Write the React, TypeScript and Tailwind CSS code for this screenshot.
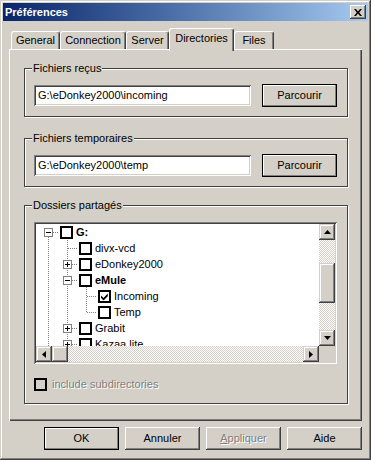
import React from 'react';

const pushBevel = 'shadow-[inset_-1px_-1px_0_#404040,inset_1px_1px_0_#ffffff,inset_-2px_-2px_0_#808080]';
const defaultBevel = 'border border-black shadow-[inset_-1px_-1px_0_#808080,inset_1px_1px_0_#ffffff]';
const scrollBevel = 'shadow-[inset_-1px_-1px_0_#404040,inset_1px_1px_0_#d4d0c8,inset_-2px_-2px_0_#808080,inset_2px_2px_0_#ffffff]';
const sunken = 'shadow-[inset_1px_1px_0_#808080,inset_-1px_-1px_0_#ffffff,inset_2px_2px_0_#404040,inset_-2px_-2px_0_#d4d0c8]';
const dither = 'bg-[image:repeating-conic-gradient(#ffffff_0_25%,#d4d0c8_0_50%)] bg-[length:2px_2px]';
const disabledText = 'text-[#808080] [text-shadow:1px_1px_0_#ffffff]';

const TABS = [
  { label: 'General', w: 'w-[49px]' },
  { label: 'Connection', w: 'w-[66px]' },
  { label: 'Server', w: 'w-[43px]' },
  { label: 'Directories', w: 'w-[65px]', active: true },
  { label: 'Files', w: 'w-[40px]' },
];

const TREE = [
  { level: 0, exp: 'minus', label: 'G:', bold: true },
  { level: 1, exp: '', label: 'divx-vcd' },
  { level: 1, exp: 'plus', label: 'eDonkey2000' },
  { level: 1, exp: 'minus', label: 'eMule', bold: true },
  { level: 2, exp: '', label: 'Incoming', checked: true },
  { level: 2, exp: '', label: 'Temp' },
  { level: 1, exp: 'plus', label: 'Grabit' },
  { level: 1, exp: 'plus', label: 'Kazaa lite' },
];

const INDENT = ['pl-[8px]', 'pl-[27px]', 'pl-[46px]'];

function Button({ label, isDefault, disabled, mnemonic }: { label: string; isDefault?: boolean; disabled?: boolean; mnemonic?: boolean }) {
  return (
    <div className={`w-[75px] h-[23px] flex items-center justify-center bg-[#d4d0c8] ${isDefault ? defaultBevel : pushBevel} ${disabled ? disabledText : ''}`}>
      {mnemonic ? (
        <span>
          <span className="underline">{label[0]}</span>
          {label.slice(1)}
        </span>
      ) : (
        label
      )}
    </div>
  );
}

function Group({ title, className = '', children }: { title: string; className?: string; children: React.ReactNode }) {
  return (
    <fieldset className={`min-w-0 border border-[#404040] shadow-[1px_1px_0_#ffffff,inset_1px_1px_0_#ffffff] ${className}`}>
      <legend className="ml-[7px] px-[1px] leading-[14px] bg-[#d4d0c8]">{title}</legend>
      {children}
    </fieldset>
  );
}

function PathRow({ value }: { value: string }) {
  return (
    <div className="flex items-center gap-[11px] pt-[9px] pb-[9px] pl-[9px] pr-[10px]">
      <div className={`w-[217px] h-[21px] bg-white flex items-center pl-[4px] ${sunken}`}>{value}</div>
      <Button label="Parcourir" isDefault />
    </div>
  );
}

function Expander({ kind }: { kind: string }) {
  if (!kind) return <div className="w-[9px] h-[9px]" />;
  return (
    <svg width="9" height="9" viewBox="0 0 9 9" shapeRendering="crispEdges" className="block shrink-0">
      <rect x="0.5" y="0.5" width="8" height="8" fill="#ffffff" stroke="#808080" />
      <line x1="2" y1="4.5" x2="7" y2="4.5" stroke="#000000" />
      {kind === 'plus' && <line x1="4.5" y1="2" x2="4.5" y2="7" stroke="#000000" />}
    </svg>
  );
}

function Check({ checked, disabled }: { checked?: boolean; disabled?: boolean }) {
  return (
    <div className={`w-[13px] h-[13px] shrink-0 border-2 border-black ${disabled ? 'bg-[#d4d0c8]' : 'bg-white'}`}>
      {checked && (
        <svg width="9" height="9" viewBox="0 0 9 9" className="block">
          <polygon points="1,3.5 3.5,6 7.8,1.5 7.8,4.2 3.5,8.4 1,5.8" fill="#000000" />
        </svg>
      )}
    </div>
  );
}

function Arrow({ dir }: { dir: 'up' | 'down' | 'left' | 'right' }) {
  const pts = {
    up: '3.5,0 7,4 0,4',
    down: '0,0 7,0 3.5,4',
    left: '4,0 4,7 0,3.5',
    right: '0,0 4,3.5 0,7',
  }[dir];
  const vertical = dir === 'up' || dir === 'down';
  return (
    <div className={`w-[16px] h-[16px] shrink-0 bg-[#d4d0c8] flex items-center justify-center ${scrollBevel}`}>
      <svg width={vertical ? 7 : 4} height={vertical ? 4 : 7} viewBox={vertical ? '0 0 7 4' : '0 0 4 7'} className="block">
        <polygon points={pts} fill="#000000" />
      </svg>
    </div>
  );
}

function TreeLines() {
  const dash = { stroke: '#808080', strokeDasharray: '1 1' };
  return (
    <svg className="absolute inset-0 pointer-events-none" width="283" height="122" shapeRendering="crispEdges">
      <line x1="12.5" y1="13" x2="12.5" y2="122" {...dash} />
      <line x1="17" y1="8.5" x2="23" y2="8.5" {...dash} />
      <line x1="31.5" y1="16" x2="31.5" y2="122" {...dash} />
      <line x1="32" y1="24.5" x2="42" y2="24.5" {...dash} />
      <line x1="36" y1="40.5" x2="42" y2="40.5" {...dash} />
      <line x1="36" y1="56.5" x2="42" y2="56.5" {...dash} />
      <line x1="36" y1="104.5" x2="42" y2="104.5" {...dash} />
      <line x1="36" y1="120.5" x2="42" y2="120.5" {...dash} />
      <line x1="50.5" y1="63" x2="50.5" y2="89" {...dash} />
      <line x1="51" y1="72.5" x2="61" y2="72.5" {...dash} />
      <line x1="51" y1="88.5" x2="61" y2="88.5" {...dash} />
    </svg>
  );
}

function FolderTree() {
  return (
    <div className={`w-[303px] h-[142px] bg-white p-[2px] ${sunken}`}>
      <div className="grid grid-cols-[283px_16px] grid-rows-[122px_16px] w-[299px] h-[138px]">
        <div className="relative overflow-hidden">
          <TreeLines />
          <div className="relative flex flex-col">
            {TREE.map((node) => (
              <div key={node.label} className={`flex items-center h-[16px] shrink-0 whitespace-nowrap ${INDENT[node.level]}`}>
                <Expander kind={node.exp} />
                <div className="ml-[7px]">
                  <Check checked={node.checked} />
                </div>
                <span className={`ml-[3px] leading-[16px] ${node.bold ? 'font-bold' : ''}`}>{node.label}</span>
              </div>
            ))}
          </div>
        </div>
        <div className="flex flex-col">
          <Arrow dir="up" />
          <div className={`h-[23px] ${dither}`} />
          <div className={`h-[40px] bg-[#d4d0c8] ${scrollBevel}`} />
          <div className={`flex-1 ${dither}`} />
          <Arrow dir="down" />
        </div>
        <div className="flex">
          <Arrow dir="left" />
          <div className={`w-[16px] bg-[#d4d0c8] ${scrollBevel}`} />
          <div className={`flex-1 ${dither}`} />
          <Arrow dir="right" />
        </div>
        <div className="bg-[#d4d0c8]" />
      </div>
    </div>
  );
}

export default function App() {
  return (
    <div className="w-[371px] h-[460px] p-[3px] flex flex-col bg-[#d4d0c8] text-[11px] text-black font-['Liberation_Sans',Arial,sans-serif] shadow-[inset_-1px_-1px_0_#404040,inset_1px_1px_0_#d4d0c8,inset_-2px_-2px_0_#808080,inset_2px_2px_0_#ffffff]">
      {/* title bar */}
      <div className="h-[18px] shrink-0 flex items-center justify-between pl-[2px] pr-[2px] bg-linear-to-r from-[#0a246a] to-[#a6caf0]">
        <span className="text-white font-bold leading-none">Préférences</span>
        <div className={`w-[16px] h-[14px] bg-[#d4d0c8] flex items-center justify-center ${pushBevel}`}>
          <svg width="8" height="7" viewBox="0 0 8 7" className="block">
            <path d="M0 0 H2 L4 2.4 L6 0 H8 L5.2 3.5 L8 7 H6 L4 4.6 L2 7 H0 L2.8 3.5 Z" fill="#000000" />
          </svg>
        </div>
      </div>

      {/* tabs */}
      <div className="h-[28px] shrink-0 flex items-end pl-[8px]">
        {TABS.map((tab) =>
          tab.active ? (
            <div
              key={tab.label}
              className={`${tab.w} relative z-10 h-[23px] -mb-[2px] pb-[4px] flex items-center justify-center bg-[#d4d0c8] border-t border-l border-white border-r border-r-[#404040] rounded-t-[3px] shadow-[inset_-1px_0_0_#808080]`}
            >
              {tab.label}
            </div>
          ) : (
            <div
              key={tab.label}
              className={`${tab.w} h-[18px] flex items-center justify-center border-t border-l border-white border-r border-r-[#404040] rounded-t-[3px] shadow-[inset_-1px_0_0_#808080]`}
            >
              {tab.label}
            </div>
          )
        )}
      </div>

      {/* tab page */}
      <div className="w-[353px] h-[372px] shrink-0 ml-[6px] pt-[12px] pl-[15px] pr-[14px] flex flex-col shadow-[inset_1px_1px_0_#ffffff,inset_-1px_-1px_0_#404040,inset_-2px_-2px_0_#808080]">
        <Group title="Fichiers reçus">
          <PathRow value={'G:\\eDonkey2000\\incoming'} />
        </Group>
        <Group title="Fichiers temporaires" className="mt-[14px]">
          <PathRow value={'G:\\eDonkey2000\\temp'} />
        </Group>
        <Group title="Dossiers partagés" className="mt-[11px]">
          <div className="pt-[10px] pb-[12px] pl-[9px]">
            <FolderTree />
            <div className="mt-[14px] h-[13px] flex items-center gap-[5px]">
              <Check disabled />
              <span className={disabledText}>include subdirectories</span>
            </div>
          </div>
        </Group>
      </div>

      {/* dialog buttons */}
      <div className="mt-[6px] flex justify-end gap-[6px] pr-[6px]">
        <Button label="OK" isDefault />
        <Button label="Annuler" />
        <Button label="Appliquer" disabled mnemonic />
        <Button label="Aide" />
      </div>
    </div>
  );
}
